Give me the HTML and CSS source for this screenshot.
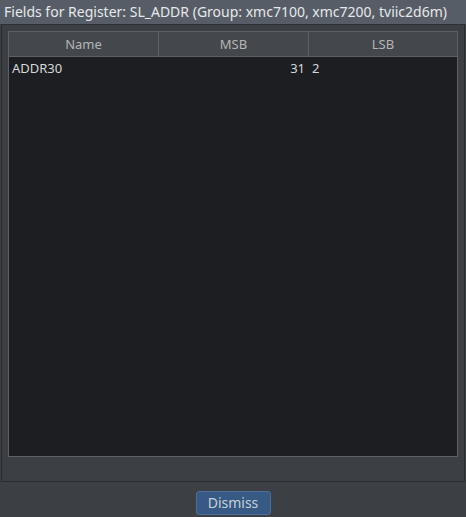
FILE: index.html
```html
<!DOCTYPE html>
<html>
<head>
<meta charset="utf-8">
<link rel="stylesheet" href="styles.css">
</head>
<body>
<div class="window">
  <div class="titlebar">Fields for Register: SL_ADDR (Group: xmc7100, xmc7200, tviic2d6m)</div>
  <div class="frame">
    <div class="table">
      <div class="head">
        <div class="hcell">Name</div>
        <div class="hcell">MSB</div>
        <div class="hcell last">LSB</div>
      </div>
      <div class="body">
        <div class="row">
          <div class="cell">ADDR30</div>
          <div class="cell num">31</div>
          <div class="cell">2</div>
        </div>
      </div>
    </div>
  </div>
  <div class="footer">
    <button class="btn">Dismiss</button>
  </div>
</div>
</body>
</html>
```
FILE: styles.css
```css
html, body {
  margin: 0;
  padding: 0;
  background: #3c3f43;
  font-family: "Noto Sans", "DejaVu Sans", sans-serif;
}
.window {
  width: 466px;
  height: 517px;
  display: flex;
  flex-direction: column;
  overflow: hidden;
}
.titlebar {
  height: 24px;
  background: #575d66;
  color: #e6e8ea;
  font-size: 14px;
  line-height: 24px;
  padding-left: 4px;
  white-space: nowrap;
  flex: none;
}
.frame {
  flex: none;
  height: 458px;
  box-sizing: border-box;
  margin: 0 1px;
  border: 1px solid #2a2c2f;
  border-top-color: #2f3236;
  background: #3c3f43;
  padding: 6px 6px 24px 6px;
  display: flex;
  box-shadow: 0 1px 0 #4a4e53;
}
.table {
  flex: 1;
  border: 1px solid #5d6165;
  background: #1d1e21;
  display: flex;
  flex-direction: column;
}
.head {
  display: grid;
  grid-template-columns: 150px 150px 1fr;
  height: 24px;
  background: #44484c;
  border-bottom: 1px solid #5d6165;
}
.hcell {
  color: #b3b5b7;
  font-size: 13px;
  line-height: 24px;
  text-align: center;
  border-right: 1px solid #5d6165;
}
.hcell.last {
  border-right: none;
}
.body {
  flex: 1;
}
.row {
  display: grid;
  grid-template-columns: 150px 150px 1fr;
  height: 24px;
}
.cell {
  color: #d6d7d8;
  font-size: 13px;
  line-height: 22px;
  padding: 0 4px 0 3px;
}
.num {
  text-align: right;
}
.footer {
  flex: 1;
  display: flex;
  justify-content: center;
  align-items: flex-start;
  padding-top: 9px;
  background: #3c3f43;
}
.btn {
  width: 75px;
  height: 24px;
  background: #365a84;
  border: 1px solid #4c6e97;
  border-radius: 3px;
  color: #c6cfd9;
  font-family: "Noto Sans", "DejaVu Sans", sans-serif;
  font-size: 14px;
  padding: 0;
  line-height: 20px;
}
```
